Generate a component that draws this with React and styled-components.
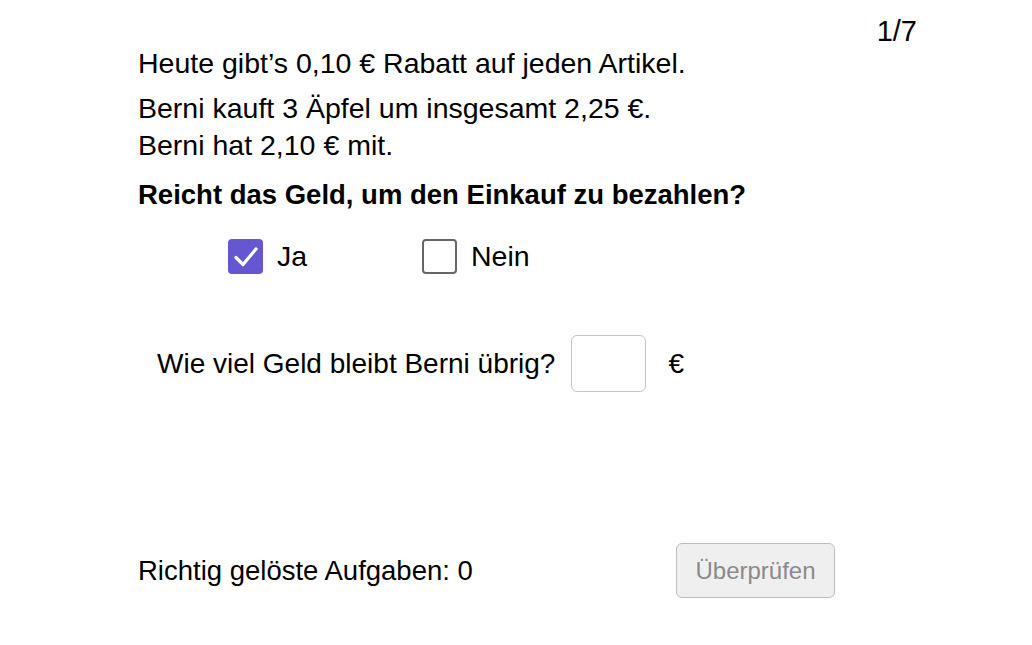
import React, { useState } from 'react';
import styled, { createGlobalStyle } from 'styled-components';

const GlobalStyle = createGlobalStyle`
  html, body {
    margin: 0;
    padding: 0;
    background: #ffffff;
  }
  body {
    font-family: "Liberation Sans", Arial, sans-serif;
    color: #000;
  }
`;

const Page = styled.div`
  width: 1032px;
  height: 645px;
  box-sizing: border-box;
  padding: 16px 115px 0 138px;
  display: flex;
  flex-direction: column;
`;

const Counter = styled.div`
  align-self: flex-end;
  font-size: 29px;
  line-height: 30px;
  height: 30px;
`;

const Line = styled.div`
  font-size: 28.5px;
  line-height: 37px;
  margin-top: ${(p) => p.$gap || 0}px;
`;

const Question = styled.div`
  font-size: 27.5px;
  font-weight: bold;
  line-height: 30px;
  margin-top: 16px;
`;

const Options = styled.div`
  display: flex;
  padding-left: 90px;
  margin-top: 29px;
`;

const Option = styled.label`
  display: flex;
  align-items: center;
  gap: 14px;
  width: 194px;
  font-size: 28.5px;
  cursor: pointer;
`;

const Box = styled.span`
  width: 35px;
  height: 35px;
  flex: none;
  box-sizing: border-box;
  border-radius: 4px;
  display: flex;
  align-items: center;
  justify-content: center;
  background: ${(p) => (p.$checked ? '#6557d2' : '#fff')};
  border: ${(p) => (p.$checked ? 'none' : '2px solid #666')};
`;

const AskRow = styled.div`
  display: flex;
  align-items: center;
  padding-left: 19px;
  margin-top: 61px;
  font-size: 28px;
`;

const Input = styled.input`
  width: 75px;
  height: 57px;
  box-sizing: border-box;
  margin: 0 22px 0 16px;
  border: 1px solid #c4c4c4;
  border-radius: 6px;
  font-size: 24px;
  text-align: center;
  outline: none;
`;

const Footer = styled.div`
  margin-top: auto;
  margin-bottom: 47px;
  display: flex;
  align-items: center;
  font-size: 27.5px;
`;

const Score = styled.div`
  width: 538px;
`;

const CheckButton = styled.button`
  width: 159px;
  height: 55px;
  font-family: inherit;
  font-size: 24px;
  color: #8a8a8a;
  background: #efefef;
  border: 1px solid #bdbdbd;
  border-radius: 6px;
`;

const Tick = () => (
  <svg width="28" height="24" viewBox="0 0 28 24">
    <path d="M4 12.5 L11 19.5 L24 4" fill="none" stroke="#fff" strokeWidth="3.2" strokeLinecap="round" strokeLinejoin="round" />
  </svg>
);

export default function App() {
  const [answer, setAnswer] = useState('ja');
  return (
    <>
      <GlobalStyle />
      <Page>
        <Counter>1/7</Counter>
        <Line $gap={-1}>Heute gibt’s 0,10 € Rabatt auf jeden Artikel.</Line>
        <Line $gap={8}>Berni kauft 3 Äpfel um insgesamt 2,25 €.</Line>
        <Line>Berni hat 2,10 € mit.</Line>
        <Question>Reicht das Geld, um den Einkauf zu bezahlen?</Question>
        <Options>
          <Option onClick={() => setAnswer('ja')}>
            <Box $checked={answer === 'ja'}>{answer === 'ja' && <Tick />}</Box>
            Ja
          </Option>
          <Option onClick={() => setAnswer('nein')}>
            <Box $checked={answer === 'nein'}>{answer === 'nein' && <Tick />}</Box>
            Nein
          </Option>
        </Options>
        <AskRow>
          Wie viel Geld bleibt Berni übrig?
          <Input type="text" />
          €
        </AskRow>
        <Footer>
          <Score>Richtig gelöste Aufgaben: 0</Score>
          <CheckButton disabled>Überprüfen</CheckButton>
        </Footer>
      </Page>
    </>
  );
}
